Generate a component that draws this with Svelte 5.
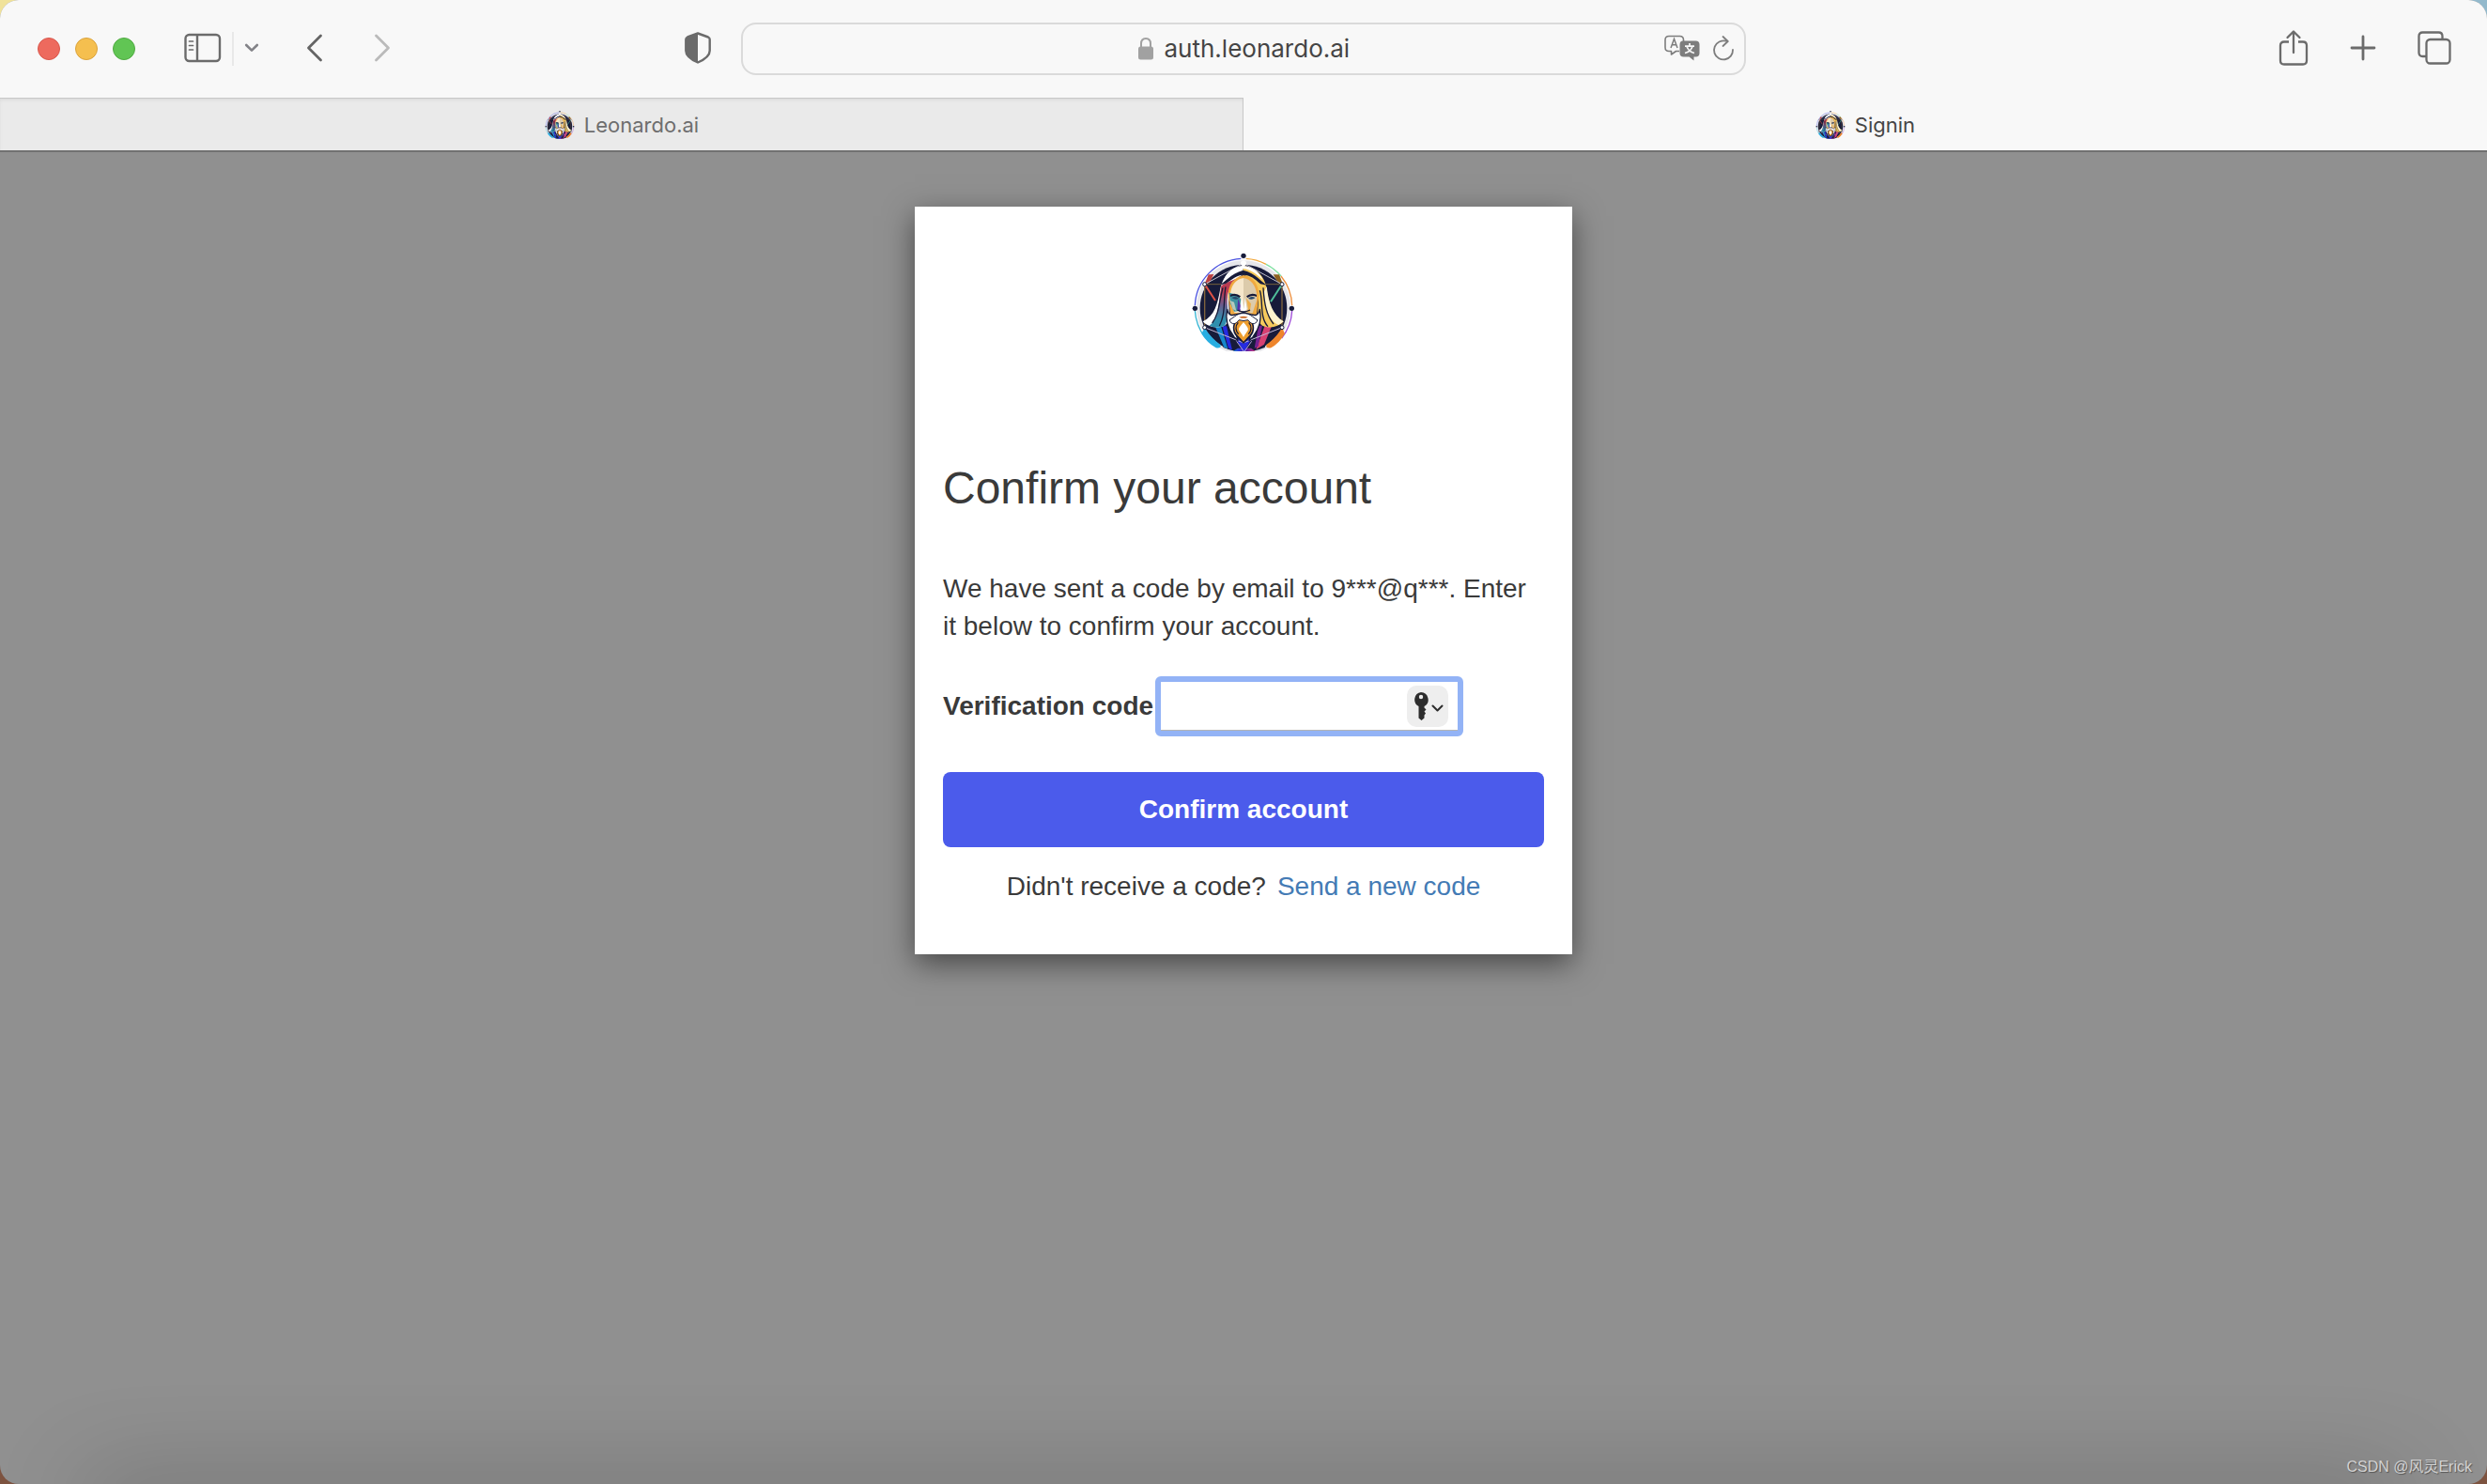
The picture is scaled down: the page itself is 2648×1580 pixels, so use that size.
<script lang="ts">
  let address = $state('auth.leonardo.ai');
  let code = $state('');
  let active = $state(1);

  const tabs = ['Leonardo.ai', 'Signin'];
</script>

{#snippet logo()}
  <svg class="logo" viewBox="40 27 336 318" aria-hidden="true">
    <defs>
      <linearGradient id="hood-left" x1="0" y1="0" x2="0" y2="1">
        <stop offset="0.3" stop-color="#b93a52" />
        <stop offset="0.55" stop-color="#6b5c8c" />
        <stop offset="0.85" stop-color="#2f8fae" />
      </linearGradient>
      <linearGradient id="robe" x1="0" y1="0" x2="1" y2="0">
        <stop offset="0" stop-color="#1e9bd0" />
        <stop offset="0.3" stop-color="#2c35d8" />
        <stop offset="0.6" stop-color="#5a1fa8" />
        <stop offset="1" stop-color="#e0407a" />
      </linearGradient>
      <clipPath id="disc"><path d="M40 27h336v315H40z" /></clipPath>
    </defs>
    <g clip-path="url(#disc)">
      <circle cx="208" cy="202" r="150" fill="#e6e6ea" />
      <circle cx="208" cy="204" r="139" fill="#171b3a" />
      <g fill="none" stroke-width="4">
        <path d="M53 196A156 156 0 0 1 200 46" stroke="#4a52e0" />
        <path d="M216 46A156 156 0 0 1 280 64" stroke="#f0a73c" />
        <path d="M280 64A156 156 0 0 1 328 102" stroke="#7ee0a0" />
        <path d="M328 102A156 156 0 0 1 363 196" stroke="#ee9140" />
        <path d="M363 212A156 156 0 0 1 330 300" stroke="#9d48d8" />
        <path d="M53 212A156 156 0 0 0 84 296" stroke="#35b5d4" />
      </g>
      <path d="M84 128L96 97L113 96L100 122Z" fill="#bb4141" />
      <path d="M303 97L322 97L334 128L318 122Z" fill="#8d6220" />
      <g fill="none" stroke-width="3">
        <path d="M84 128L208 61L331 128" stroke="#c3c1cc" />
        <path d="M84 128V266M331 128V266" stroke="#80643e" stroke-width="4" />
        <path d="M84 128H331" stroke="#76613a" />
        <path d="M84 128L118 180" stroke="#df5145" stroke-width="6" />
        <path d="M331 128L295 184" stroke="#4fbf9a" stroke-width="6" />
      </g>
      <path d="M84 266C96 288 114 306 135 322Q137 334 120 331Q92 316 74 286Z" fill="#28aee2" />
      <path d="M331 266C318 290 301 306 281 321Q278 334 296 331Q322 317 340 286Z" fill="#ee852c" />
      <path d="M118 262L152 250H264L300 264L276 330Q208 358 144 330Z" fill="#171b3a" />
      <path d="M118 264L146 330L158 334L136 262Z" fill="#1687cc" />
      <path d="M140 262L160 332L172 338L154 262Z" fill="#252be0" />
      <path d="M298 262L274 320L248 336L276 260Z" fill="#d64072" />
      <path d="M268 260L255 326L243 332L256 260Z" fill="#742092" />
      <path d="M170 345L190 332H232L250 345Z" fill="url(#robe)" />
      <path d="M172 284L210 344L242 286L208 316Z" fill="#252be0" />
      <path d="M84 266L208 315L331 266" fill="none" stroke="#c4b8d8" stroke-width="3" />
      <path d="M186 310L210 344L234 310" fill="none" stroke="#b8a8e0" stroke-width="3" />

      <path d="M207 69C168 74 142 102 134 142C125 192 116 229 78 247C96 266 126 270 148 260C162 251 164 226 160 184C158 144 171 118 207 96Z" fill="#fff" />
      <path d="M207 69C249 74 276 102 282 142C289 192 298 229 336 247C318 266 290 270 268 260C252 250 252 224 256 184C258 144 246 118 207 96Z" fill="#f5c95c" />
      <path d="M282 135C288 188 302 226 336 247L320 258C293 247 277 214 273 154Z" fill="#fff4cf" />
      <path d="M137 133C160 119 180 111 207 106L207 119C181 121 162 135 157 163C153 200 166 232 148 260C132 268 114 267 99 260C130 240 127 190 137 133Z" fill="url(#hood-left)" />
      <path d="M128 132C149 123 165 94 207 83C248 92 266 123 286 132L262 127C244 110 230 99 207 98C185 99 170 114 151 126Z" fill="#171b3a" />
      <path d="M207 69C176 72 156 88 146 112C165 98 181 82 207 78C232 81 252 98 270 114C258 88 238 72 207 69Z" fill="#fff" />
      <path d="M142 139C129 189 131 220 108 252M151 136C143 185 151 223 131 261M271 139C274 190 281 226 304 255M260 148C272 181 258 233 286 263" fill="none" stroke="#171b3a" stroke-width="4" />
      <path d="M208 99C240 105 257 128 257 165L248 240H168L159 165C159 128 176 107 208 99Z" fill="#f0a940" />
      <path d="M208 108C181 113 169 132 166 158L164 180L179 218L208 222Z" fill="#f6e7cb" />
      <path d="M208 108C234 113 246 132 250 158V180L237 220L208 222Z" fill="#dccbab" />
      <path d="M162 155L190 162L200 176L194 213L178 215L166 190Z" fill="#3e92a0" />
      <path d="M165 180L178 185L185 213L174 208Z" fill="#b7c9bc" />
      <path d="M191 174L202 207L194 216L188 207Z" fill="#5530a8" />
      <path d="M166 161Q184 153 199 166L195 171Q180 160 166 168ZM250 161Q232 153 217 166L221 171Q236 160 250 168Z" fill="#171b3a" />
      <path d="M170 171Q184 164 193 173Q182 180 170 171ZM246 171Q232 164 223 173Q234 180 246 171Z" fill="#28496c" />
      <path d="M202 171L197 208L208 216L219 208L213 171L209 207Z" fill="#fff" />
      <path d="M217 173L223 207L216 216L228 218L232 190Z" fill="#eeae47" />
      <path d="M188 210Q208 222 229 210" fill="none" stroke="#171b3a" stroke-width="4" />
      <path d="M156 208C149 240 156 268 178 296L190 308Q180 276 190 244H226Q236 276 226 308L238 296C260 268 267 240 260 208C256 230 243 228 231 224Q220 222 208 217Q196 222 185 224C172 228 160 230 156 208Z" fill="#fff" stroke="#171b3a" stroke-width="4" stroke-linejoin="round" />
      <path d="M186 240C171 254 170 280 186 296L208 318L230 296C246 280 245 254 230 240Z" fill="#171b3a" />
      <path d="M190 241C176 257 175 277 190 292L208 311L226 292C241 277 240 257 226 241Z" fill="#ee9d2d" />
      <path d="M191 250C180 262 183 278 192 287M225 250C236 262 233 278 224 287" fill="none" stroke="#171b3a" stroke-width="4" />
      <path d="M208 249C201 259 191 266 194 275C198 282 203 286 208 297C213 286 218 282 222 275C225 266 215 259 208 249Z" fill="#fff" />
      <path d="M208 221C188 220 181 232 163 242C171 262 185 254 194 242Q208 247 222 242C231 254 245 262 253 242C235 232 228 220 208 221Z" fill="#fff" stroke="#171b3a" stroke-width="3" />
      <path d="M194 233Q208 227 222 233Q208 240 194 233Z" fill="#c96624" />
      <g fill="#171b3a">
        <circle cx="208" cy="37" r="8" /><circle cx="53" cy="205" r="8" /><circle cx="362" cy="205" r="8" />
      </g>
      <g fill="#fff" stroke="#171b3a" stroke-width="3">
        <circle cx="84" cy="128" r="6" /><circle cx="331" cy="128" r="6" />
        <circle cx="84" cy="266" r="6" /><circle cx="331" cy="266" r="6" />
      </g>
      <circle cx="208" cy="61" r="9" fill="#fff" />
    </g>
  </svg>
{/snippet}

<div class="desktop">
  <div class="window">
    <header class="toolbar">
      <div class="tools-left">
        <div class="lights">
          <button class="light red" aria-label="Close"></button>
          <button class="light yellow" aria-label="Minimize"></button>
          <button class="light green" aria-label="Zoom"></button>
        </div>
        <div class="sidebar-group">
          <button class="tool" aria-label="Show sidebar">
            <svg width="40" height="32" viewBox="0 0 40 32" fill="none" stroke="#6b6b6b" stroke-width="2.4">
              <rect x="1.5" y="2" width="36.5" height="28" rx="4" />
              <path d="M14 2v28" />
              <path d="M5.5 9h4M5.5 13.5h4M5.5 18h4" stroke-width="1.7" stroke-linecap="round" />
            </svg>
          </button>
          <span class="divider"></span>
          <button class="tool" aria-label="Tab groups">
            <svg width="16" height="12" viewBox="0 0 16 12" fill="none" stroke="#828287" stroke-width="2.6" stroke-linecap="round" stroke-linejoin="round">
              <path d="M2.2 3L8 8.6L13.8 3" />
            </svg>
          </button>
        </div>
        <div class="history">
          <button class="tool" aria-label="Back">
            <svg width="18" height="30" viewBox="0 0 18 30" fill="none" stroke="#656565" stroke-width="2.8" stroke-linecap="round" stroke-linejoin="round">
              <path d="M15.5 2L2.5 15L15.5 28" />
            </svg>
          </button>
          <button class="tool" aria-label="Forward" disabled>
            <svg width="18" height="30" viewBox="0 0 18 30" fill="none" stroke="#bababa" stroke-width="2.8" stroke-linecap="round" stroke-linejoin="round">
              <path d="M2.5 2L15.5 15L2.5 28" />
            </svg>
          </button>
        </div>
        <button class="tool shield" aria-label="Privacy report">
          <svg width="28" height="34" viewBox="0 0 28 34">
            <path d="M14 1.5L25 5.5Q26.7 6.2 26.7 8V20Q26.7 27 14 32.5Q1.3 27 1.3 20V8Q1.3 6.2 3 5.5Z" fill="none" stroke="#6b6b6b" stroke-width="2.4" stroke-linejoin="round" />
            <path d="M14 1.5L3 5.5Q1.3 6.2 1.3 8V20Q1.3 27 14 32.5Z" fill="#6b6b6b" />
          </svg>
        </button>
      </div>

      <div class="address-bar">
        <div class="address">
          <svg width="18" height="26" viewBox="0 0 18 26">
            <rect x="1" y="10.5" width="16" height="14" rx="2.5" fill="#a1a1a1" />
            <path d="M4 11V7.5Q4 2 9 2T14 7.5V11" fill="none" stroke="#a1a1a1" stroke-width="2" />
          </svg>
          <input type="text" aria-label="Address" bind:value={address} />
        </div>
        <div class="address-actions">
          <button class="tool" aria-label="Translate">
            <svg width="38" height="28" viewBox="0 0 38 28" fill="none" stroke="#7d7d7d">
              <path d="M16 17.5H12.5L7.5 21V17.5H5Q1 17.5 1 13.5V5.5Q1 1.5 5 1.5H16.5Q20.5 1.5 20.5 5.5V7" stroke-width="1.6" stroke-linejoin="round" />
              <path d="M7 14L10.5 4.5L14 14M8.3 10.8H12.7" stroke-width="1.5" />
              <path d="M20 6.5H33.5Q37.5 6.5 37.5 10.5V19.5Q37.5 23.5 33.5 23.5H31.5V27.5L26.5 23.5H20.5Q16.5 23.5 16.5 19.5V10.5Q16.5 6.5 20 6.5Z" fill="#7d7d7d" stroke="none" />
              <path d="M27 9V12M22 12.2H32M24 12.5Q26 18 32 19.5M30 12.5Q28 18 22 19.5" stroke="#f8f8f8" stroke-width="1.7" />
            </svg>
          </button>
          <button class="tool" aria-label="Reload">
            <svg width="24" height="28" viewBox="0 0 24 28" fill="none" stroke="#7d7d7d" stroke-width="1.8" stroke-linecap="round" stroke-linejoin="round">
              <path d="M16.5 7Q12 5.4 7.5 7.5A10 10 0 1 0 22 16" />
              <path d="M11.5 2L16.7 7L11.5 12" />
            </svg>
          </button>
        </div>
      </div>

      <div class="tools-right">
        <button class="tool" aria-label="Share">
          <svg width="32" height="40" viewBox="0 0 32 40" fill="none" stroke="#6b6b6b" stroke-width="2.3" stroke-linecap="round" stroke-linejoin="round">
            <path d="M11 13.5H6Q2 13.5 2 17.5V33.5Q2 37.5 6 37.5H26Q30 37.5 30 33.5V17.5Q30 13.5 26 13.5H21" stroke-linecap="butt" />
            <path d="M16 25V3M9.5 9L16 2.5L22.5 9" />
          </svg>
        </button>
        <button class="tool" aria-label="New tab">
          <svg width="28" height="28" viewBox="0 0 28 28" fill="none" stroke="#6b6b6b" stroke-width="2.8" stroke-linecap="round">
            <path d="M14 2V26M2 14H26" />
          </svg>
        </button>
        <button class="tool" aria-label="Tab overview">
          <svg width="36" height="36" viewBox="0 0 36 36" fill="none" stroke="#6b6b6b" stroke-width="2.3">
            <path d="M9 27H5.5Q1.5 27 1.5 23V5.5Q1.5 1.5 5.5 1.5H22.5Q26.5 1.5 26.5 5.5V9" />
            <rect x="9.5" y="9" width="25" height="25.5" rx="4" />
          </svg>
        </button>
      </div>
    </header>

    <nav class="tabs">
      {#each tabs as tab, i}
        <button class="tab" class:active={active === i} onclick={() => (active = i)}>
          {@render logo()}
          {tab}
        </button>
      {/each}
    </nav>

    <main class="page">
      <form class="card" onsubmit={(e) => e.preventDefault()}>
        <div class="brand">{@render logo()}</div>
        <h1>Confirm your account</h1>
        <p class="message">
          We have sent a code by email to 9***@q***. Enter it below to confirm your account.
        </p>
        <div class="field">
          <label for="code">Verification code</label>
          <div class="code-box">
            <input id="code" type="text" autocomplete="one-time-code" bind:value={code} />
            <button type="button" class="autofill" aria-label="Fill password">
              <svg width="36" height="32" viewBox="0 0 36 32">
                <path d="M11 1A8 8 0 0 1 14.500 16V17.500L16.500 19.500L14.500 21.500L16 23.500L14.500 25.500V28.500L11.500 31L8.500 28.500V16A8 8 0 0 1 11 1Z" fill="#2d2d2d" />
                <circle cx="11" cy="6" r="2.2" fill="#eee" />
                <path d="M23.5 15.5L28.5 20.5L33.500 15.5" fill="none" stroke="#2d2d2d" stroke-width="2" stroke-linecap="round" stroke-linejoin="round" />
              </svg>
            </button>
          </div>
        </div>
        <button type="submit" class="submit">Confirm account</button>
        <p class="resend">
          <span>Didn't receive a code?</span>
          <a href="#resend">Send a new code</a>
        </p>
      </form>
      <div class="shade"></div>
      <span class="watermark">CSDN @风灵Erick</span>
    </main>
  </div>
</div>

<style>
  :global(body) {
    margin: 0;
  }

  .desktop {
    background: linear-gradient(to right, #f0e29a 50%, #93b9cc 50%) top / 100% 50% no-repeat, #7d5340;
  }

  .window {
    display: flex;
    flex-direction: column;
    min-height: 100vh;
    border-radius: 20px;
    overflow: hidden;
    background: #909090;
    font-family: Inter, sans-serif;
  }

  button {
    margin: 0;
    padding: 0;
    border: none;
    background: none;
    font: inherit;
    cursor: pointer;
  }

  svg {
    display: block;
    flex: none;
  }

  .tool {
    display: flex;
    padding-bottom: 2px;
  }

  /* Toolbar */
  .toolbar {
    display: grid;
    grid-template-columns: 1fr minmax(0, 1070px) 1fr;
    align-items: center;
    height: 104px;
    background: #f8f8f8;
  }

  .tools-left {
    display: flex;
    align-items: center;
    padding: 0 32px 0 40px;
  }

  .lights {
    display: flex;
    gap: 16px;
  }

  .light {
    width: 24px;
    height: 24px;
    border-radius: 50%;
  }

  .red {
    background: #ed6a5e;
    border: 1px solid #d9574c;
  }

  .yellow {
    background: #f5bf4f;
    border: 1px solid #dba33c;
  }

  .green {
    background: #61c554;
    border: 1px solid #50ab42;
  }

  .sidebar-group {
    display: flex;
    align-items: center;
    gap: 11px;
    margin-left: 52px;
  }

  .divider {
    width: 2px;
    height: 36px;
    background: #e8e8e8;
  }

  .history {
    display: flex;
    gap: 54px;
    margin-left: 50px;
  }

  .shield {
    margin-left: auto;
  }

  .address-bar {
    display: grid;
    grid-template-columns: 1fr auto 1fr;
    align-items: center;
    box-sizing: border-box;
    height: 56px;
    padding: 0 10px;
    border: 2px solid #dadada;
    border-radius: 16px;
  }

  .address {
    display: flex;
    grid-column: 2;
    align-items: center;
    gap: 11px;
  }

  .address input {
    width: 198px;
    padding: 0;
    border: none;
    outline: none;
    background: none;
    color: #454545;
    font: 26px/32px Inter, sans-serif;
  }

  .address-actions {
    display: flex;
    align-items: center;
    justify-content: flex-end;
    gap: 13px;
  }

  .tools-right {
    display: flex;
    align-items: center;
    justify-content: flex-end;
    gap: 44px;
    padding-right: 38px;
  }

  /* Tabs */
  .tabs {
    display: flex;
    height: 56px;
    border-bottom: 2px solid #717171;
    background: #f8f8f8;
  }

  .tab {
    display: flex;
    flex: 1;
    align-items: center;
    justify-content: center;
    gap: 10px;
    padding-top: 2px;
    background: #eaeaea;
    box-shadow: inset -1px 1px #c8c8c8, inset 0 3px 3px #dddddd;
    color: #6e6e6e;
    font-size: 22px;
  }

  .tab.active {
    background: #f8f8f8;
    box-shadow: none;
    color: #454545;
  }

  .tab .logo {
    width: 32px;
    height: 32px;
  }

  /* Page */
  .page {
    position: relative;
    flex: 1;
    overflow: hidden;
    font-family: 'Liberation Sans', Arial, sans-serif;
  }

  .card {
    box-sizing: border-box;
    max-width: 700px;
    margin: 58px auto;
    padding: 49px 30px 52px;
    background: #fff;
    box-shadow: 0 10px 30px rgba(0, 0, 0, 0.5);
    color: #3a3a3a;
    font-size: 28px;
    line-height: 40px;
  }

  .brand {
    display: flex;
    justify-content: center;
  }

  .brand .logo {
    width: 112px;
    height: 106px;
  }

  h1 {
    margin: 119px 0 61px;
    font-size: 48px;
    font-weight: 400;
    line-height: 52px;
  }

  .message {
    margin: 0 0 33px;
  }

  .field {
    display: flex;
    align-items: center;
    gap: 2px;
  }

  label {
    font-weight: 700;
  }

  .code-box {
    position: relative;
    width: 328px;
  }

  .code-box input {
    display: block;
    box-sizing: border-box;
    width: 100%;
    height: 64px;
    padding: 0 64px 0 12px;
    border: 6px solid #93b3f6;
    border-radius: 6px;
    outline: none;
    box-shadow: inset 0 -1px #b4b4b4;
    font: inherit;
  }

  .autofill {
    position: absolute;
    top: 10px;
    right: 16px;
    display: flex;
    align-items: center;
    justify-content: center;
    width: 44px;
    height: 44px;
    border-radius: 10px;
    background: #eee;
  }

  .submit {
    width: 100%;
    height: 80px;
    margin: 38px 0 22px;
    border-radius: 8px;
    background: #4b5beb;
    color: #fff;
    font-weight: 700;
  }

  .resend {
    display: flex;
    justify-content: center;
    gap: 12px;
    margin: 0;
  }

  .resend a {
    color: #447bb5;
    text-decoration: none;
  }

  .shade {
    position: absolute;
    right: 90px;
    bottom: -40px;
    left: 90px;
    height: 40px;
    box-shadow: 0 0 100px rgba(0, 0, 0, 0.3);
  }

  .watermark {
    position: absolute;
    right: 16px;
    bottom: 6px;
    color: #d2d2d2;
    font: 16px/24px 'Liberation Sans', 'Noto Sans CJK SC', sans-serif;
    text-shadow: 1px 1px 1px #555;
  }
</style>
